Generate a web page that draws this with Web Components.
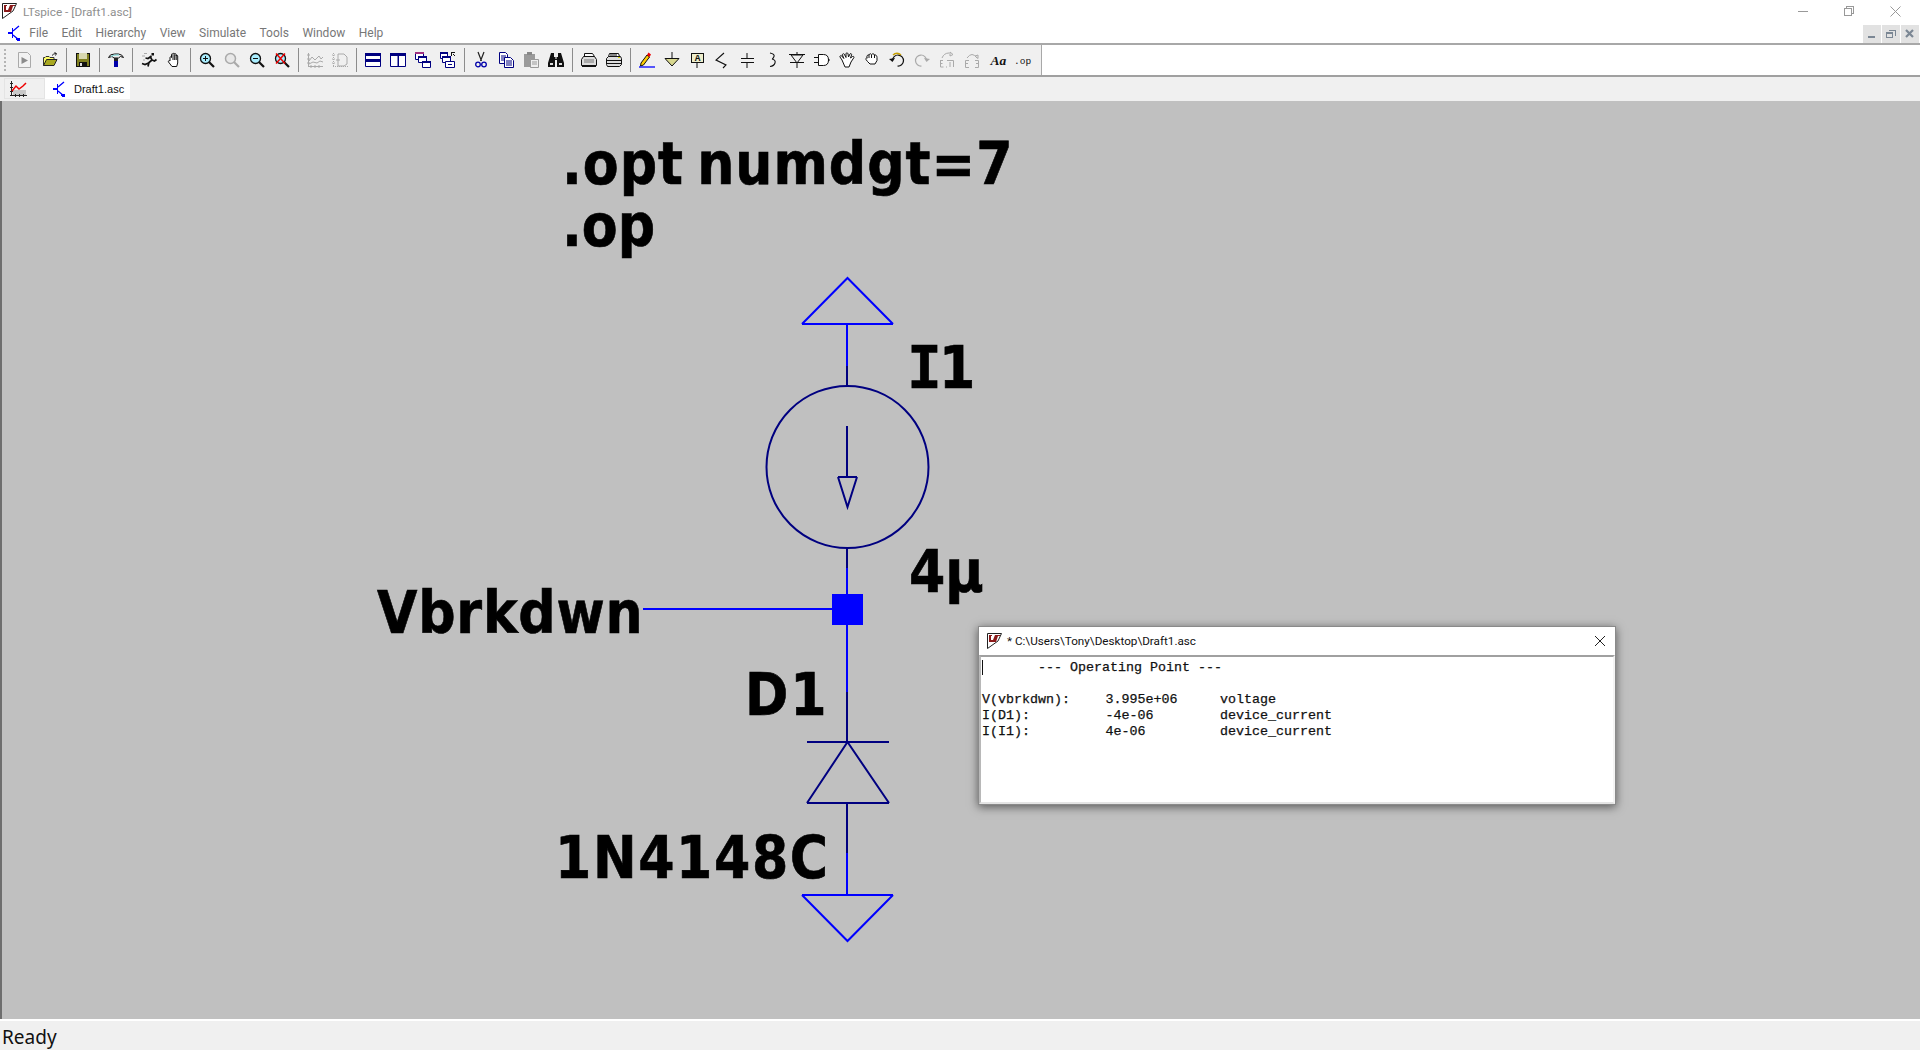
<!DOCTYPE html>
<html>
<head>
<meta charset="utf-8">
<title>LTspice</title>
<style>
html, body { margin: 0; padding: 0; height: 100%; overflow: hidden; background: #f0f0f0; }
</style>
</head>
<body>
<lt-app>
    <lt-titlebar slot="title">LTspice - [Draft1.asc]</lt-titlebar>
    <lt-menubar slot="menu">
        <lt-menu>File</lt-menu><lt-menu>Edit</lt-menu><lt-menu>Hierarchy</lt-menu><lt-menu>View</lt-menu>
        <lt-menu>Simulate</lt-menu><lt-menu>Tools</lt-menu><lt-menu>Window</lt-menu><lt-menu>Help</lt-menu>
    </lt-menubar>
    <lt-toolbar slot="tools"></lt-toolbar>
    <lt-tabs slot="tabs">Draft1.asc</lt-tabs>
    <lt-schematic slot="canvas">
        <lt-label x="562" base="184" spacing="1">.opt numdgt=7</lt-label>
        <lt-label x="562" base="246">.op</lt-label>
        <lt-label x="907" base="388"><span style="font-family:'DejaVu Sans Mono',monospace;letter-spacing:-3px">I</span>1</lt-label>
        <lt-label x="909" base="592">4µ</lt-label>
        <lt-label x="377" base="633" spacing="0.8">Vbrkdwn</lt-label>
        <lt-label x="745" base="715" spacing="2">D1</lt-label>
        <lt-label x="555" base="878" spacing="1.6">1N4148C</lt-label>
        <lt-log-window>
            <lt-log-row first="--- Operating Point ---" head></lt-log-row>
            <lt-log-row></lt-log-row>
            <lt-log-row first="V(vbrkdwn):" second="3.995e+06" third="voltage"></lt-log-row>
            <lt-log-row first="I(D1):" second="-4e-06" third="device_current"></lt-log-row>
            <lt-log-row first="I(I1):" second="4e-06" third="device_current"></lt-log-row>
        </lt-log-window>
    </lt-schematic>
    <lt-status slot="status">Ready</lt-status>
</lt-app>

<script>
// small shared drawings
const LT_LOGO = `<svg width="16" height="18" viewBox="0 0 16 18"><path d="M1.5 1.5h14L12 9 1.5 16.5z" fill="#fff" stroke="#222"/><path d="M3 3h3v1H5v4h2l2-5h5v1h-2l-2 6H3z" fill="#8b1a1a"/></svg>`;
const TRANSISTOR = `<svg width="14" height="16" viewBox="0 0 14 16" shape-rendering="crispEdges"><path d="M0 8h4M4.5 3v10" stroke="#00f" stroke-width="1.5" fill="none"/><path d="M5 6l6-5M5 10l6 5" stroke="#00f" stroke-width="1.3" fill="none" shape-rendering="auto"/><path d="M8 13h4v3H9z" fill="#00f"/></svg>`;

// toolbar icons, all on a 16x16 grid
const ICONS = {
    new: `<path d="M1.500 .5h9l3 3v12h-12z" fill="#f2f2f2" stroke="#aaa"/><path d="M4.500 5l6.500 3.500L4.500 12z" fill="#8c8c8c"/>`,
    open: `<path d="M1.500 13.500v-8h1.500l1-1h3l1 1h4v2" fill="#ff6" stroke="#333" /><path d="M1.500 13.500l3-6h10.500l-3 6z" fill="#a8a820" stroke="#222"/><path d="M10 3.500q1.500-2 4-2M12.500 .5l2 1-1 2" fill="none" stroke="#222"/>`,
    save: `<path d="M1 1h14v14H1z" fill="#111"/><path d="M2 2h12v12H2z" fill="#808020"/><path d="M4 1h8v6H4z" fill="#d8d8b0"/><path d="M4 10h8v5H4z" fill="#111"/><path d="M5 11h2v3H5z" fill="#ddd"/>`,
    hammer: `<path d="M.5 5.500q1-3.500 6-3.500h4q4 .5 5 3.500l-3-1-2 1.500H6L4 4.500z" fill="#eee" stroke="#111"/><path d="M3 4.500q2-1.500 5-1.500h3" fill="none" stroke="#7dd"/><path d="M6 6h4v3H6z" fill="#222"/><path d="M6 9h4v6H6z" fill="#00a"/>`,
    run: `<path d="M10.500 1h2.500v2.500h-2.500z" fill="#111"/><path d="M10.500 4L7 6.500 4.500 6M9.500 5l1.500 3-3 2.500-1 4M11 8l2.500 1 2-1.500M7.500 11L4 12.500 1 11.500" fill="none" stroke="#111" stroke-width="1.700"/><path d="M3 1.500h3M1 4h3M2 8h2" stroke="#aaa" fill="none"/>`,
    hand: `<path d="M4 9V5.500c0-1 1.500-1 1.500 0V2.500c0-1 1.500-1 1.500 0V2c0-1 1.700-1 1.700 0v.5c0-1 1.500-1 1.500 0V4c0-1 1.500-1 1.500 0v7l-1 3.500H6L2.500 10c-.6-1 .6-2 1.500-1z" fill="#fff" stroke="#111"/><path d="M7 3v5M8.700 3v5M10.200 3v5" stroke="#111" fill="none"/>`,
    zoomin: `<circle cx="6.500" cy="6.500" r="5" fill="#aef" stroke="#111" stroke-width="1.300"/><path d="M4 6.500h5M6.500 4v5" stroke="#111"/><path d="M10 10l5 5" stroke="#111" stroke-width="2.200"/>`,
    zoomgray: `<circle cx="6.500" cy="6.500" r="5" fill="#e8e8e8" stroke="#aaa" stroke-width="1.500"/><path d="M10 10l5 5" stroke="#aaa" stroke-width="2.200"/>`,
    zoomout: `<circle cx="6.500" cy="6.500" r="5" fill="#aef" stroke="#111" stroke-width="1.300"/><path d="M4 6.500h5" stroke="#111"/><path d="M10 10l5 5" stroke="#111" stroke-width="2.200"/>`,
    zoomcancel: `<circle cx="6.500" cy="6.500" r="5" fill="#aef" stroke="#111" stroke-width="1.300"/><path d="M10 10l5 5" stroke="#111" stroke-width="2.200"/><path d="M2 1.500l9 10M11 1.500l-9 10" stroke="#e00" stroke-width="1.500"/>`,
    plot: `<path d="M1.500 1v14M0 3h3M0 7h3M0 11h3M1 14.500h15M4 13v3M8 13v3M12 13v3" stroke="#aaa" fill="none"/><path d="M2 9l3-4 3 3 4-4 2 3 2-2M2 12l4-2 4 1 3-2 3 1" stroke="#aaa" fill="none"/>`,
    plotzoom: `<path d="M1.500 1v14M0 3h3M0 7h3M0 11h3M1 14.500h15" stroke="#aaa" fill="none" stroke-dasharray="1 1"/><path d="M6 2h6l3 3v7l-3 2H6z M4 8h4" stroke="#aaa" fill="none"/>`,
    tileh: `<path d="M.5 1.500h15v13H.5z" fill="#fff" stroke="#000080"/><path d="M0 1h16v3H0zM0 7h16v3H0z" fill="#000080"/>`,
    tilev: `<path d="M.5 1.500h15v13H.5zM8 2v13" fill="#fff" stroke="#000080"/><path d="M0 1h16v3H0z" fill="#000080"/><path d="M8 1h1v14H8z" fill="#000080"/>`,
    cascade: `<path d="M.5 .5h8v7h-8z" fill="#fff" stroke="#000080"/><path d="M0 0h9v2H0z" fill="#a03080"/><path d="M3.500 4.500h8v6h-8z" fill="#fff" stroke="#000080"/><path d="M3 4h9v2H3z" fill="#000080"/><path d="M7.500 9.500h8v6h-8z" fill="#fff" stroke="#000080"/><path d="M7 9h9v2H7z" fill="#000080"/>`,
    arrange: `<path d="M.5 .5h7v6h-7z" fill="#fff" stroke="#000080"/><path d="M0 0h8v2H0z" fill="#000080"/><path d="M2.500 4.500h8v6h-8z" fill="#fff" stroke="#000080"/><path d="M2 4h9v2H2z" fill="#000080"/><path d="M5.500 9.500h9v6h-9z" fill="#fff" stroke="#000080"/><path d="M8 12h4v1H8z" fill="#000080"/><path d="M11 0h4v1h-3v3h-1zM13 2h1v1h1v1h-1v-1h-1z" fill="#111"/>`,
    cut: `<path d="M5 0l3.500 9M11 0L7.500 9" stroke="#222" fill="none" stroke-width="1.200"/><circle cx="5" cy="12.500" r="2.300" fill="none" stroke="#00a" stroke-width="1.300"/><circle cx="11" cy="12.500" r="2.300" fill="none" stroke="#00a" stroke-width="1.300"/>`,
    copy: `<path d="M1.500 .5h6l2 2v9h-8z" fill="#fff" stroke="#000080"/><path d="M3 4h5M3 6h5M3 8h5" stroke="#000080"/><path d="M6.500 5.500h6l3 3v7h-9z" fill="#fff" stroke="#000080"/><path d="M8 9h6M8 11h6M8 13h6" stroke="#000080"/>`,
    paste: `<path d="M1 2h11v13H1z" fill="#9a9a9a"/><path d="M4 0h5v3H4z" fill="#888"/><path d="M7.500 7.500h8v8h-8z" fill="#eee" stroke="#999"/><path d="M9 10h5M9 12h5" stroke="#999"/>`,
    find: `<path d="M3 1h3v4h4V1h3l3 10v4H9V8H7v7H0v-4z" fill="#111"/><path d="M2 11h3v2H2zM11 11h3v2h-3z" fill="#ddd"/><path d="M7 5h2v2H7z" fill="#888"/>`,
    preview: `<path d="M3.500 1.500h8l2 3v3h-10z" fill="#fff" stroke="#111"/><path d="M.5 7.500l2-3h11l2 3v6h-15z" fill="#ddd" stroke="#111"/><path d="M3 7h10v4H3z" fill="#aaa"/><path d="M1 13h14v2H1z" fill="#111"/>`,
    print: `<path d="M3.500 1.500h9l1 3h-11z" fill="#fff" stroke="#111"/><path d="M4 3h7" stroke="#111"/><path d="M.5 6.500l2-2h12l1 2v6l-2 2h-12l-1-2z" fill="#ddd" stroke="#111"/><path d="M1 8h14v1H1zM1 11h14v1H1z" fill="#111"/><path d="M12 5h2v1h-2z" fill="#dd0"/>`,
    pencil: `<path d="M2 11l6-8 2.500 2-6 8-3 1z" fill="#fc0" stroke="#111"/><path d="M8 3l1.500-2.500 2.500 2L10.500 5z" fill="#e00"/><path d="M0 15h16" stroke="#00f" stroke-width="1.300"/>`,
    ground: `<path d="M8 0v6" stroke="#111"/><path d="M1 6.500h14L8 14z" fill="#d8d890" stroke="#111"/><path d="M1 6h14v1H1z" fill="#111"/>`,
    label: `<path d="M8 11v5" stroke="#111"/><path d="M2 1h13v10H2z" fill="#111"/><path d="M3 2h11v8H3z" fill="#eec"/><text x="8.500" y="9.300" font-family="Liberation Mono, monospace" font-size="9.500" font-weight="bold" text-anchor="middle" fill="#111">A</text>`,
    res: `<path d="M10 1L2 8l10 5-3 3" fill="none" stroke="#111" stroke-width="1.100"/>`,
    cap: `<path d="M8 1v5M2 6.500h13M2 10.500h13M8 11v5" fill="none" stroke="#111"/>`,
    ind: `<path d="M6 1q5 1 4 3.500T8 7q4 1 3 4t-5 3.500" fill="none" stroke="#111" stroke-width="1.100"/>`,
    diode: `<path d="M0 2.500h16M2 3h12L8 11zM8 0v3M1 10.500h14M8 11v5" fill="none" stroke="#111"/>`,
    comp: `<path d="M0 5.500h4M0 10.500h4M4.500 2.500h5q5 0 5 5.500t-5 5.500h-5zM14 8h2" fill="#fff" stroke="#111"/>`,
    hopen: `<path d="M3 8L1 5c-.5-1 1-2 1.800-1l2 2.500L3.500 3c-.5-1 1.200-1.800 1.800-.8L7 5.500V1.800c0-1.300 1.800-1.300 2 0L9.500 5 11 2c.5-1 2-.3 1.600.8L11.500 6l2-1.500c1-.6 2 .5 1.200 1.400L12 10l-2 5H6z" fill="#fff" stroke="#111"/>`,
    hclosed: `<path d="M3 5.500C2.500 3.500 4 2.500 5 3c.5-1.500 2-1.500 2.500-.5 1-1 2.500-1 3 .5 1-.5 2.500.5 2.500 2.500v3l-2 3.500H6L3.500 9.500 2 7.500c-.5-1 .5-2 1.500-1.500zM7.500 3v3M10.500 3v3M5 3v3" fill="#fff" stroke="#111"/>`,
    undo: `<path d="M3.500 8.500A5.500 5.500 0 1 1 8.500 14" fill="none" stroke="#111" stroke-width="1.200"/><path d="M4 3a5.500 5.500 0 0 1 8 0" fill="none" stroke="#c8a000" stroke-width="1.300"/><path d="M0 7l3.500 3L6 6z" fill="#111"/>`,
    redo: `<path d="M12.500 8.500A5.500 5.500 0 1 0 7.500 14" fill="none" stroke="#aaa" stroke-width="1.200"/><path d="M16 7l-3.500 3L10 6z" fill="#aaa"/>`,
    rot: `<path d="M1 8.500h3M1.500 8v7h3M1 11.500h2.500M8 8.500h6.500V15M11 10v5M7 15h1" fill="none" stroke="#aaa"/><path d="M3 6Q5 1 10 1M11 0l3 2.500L11 4z" fill="none" stroke="#aaa"/>`,
    mirror: `<path d="M5 8.500H1.500v7H5M1 11.500h3M11 8.500h3.500v7H11M12 11.500h2.500" fill="none" stroke="#aaa"/><path d="M3 6Q8 -1 13 6M11 4l3 2.500V3z" fill="none" stroke="#aaa"/>`,
    aa: `<text x="1.500" y="13" font-family="Liberation Serif, serif" font-size="13.500" font-weight="bold" font-style="italic" fill="#111">Aa</text>`,
    dotop: `<text x="0" y="12" font-family="Liberation Mono, monospace" font-size="9.500" fill="#111">.op</text>`
};

// toolbar layout, "|" is a separator
const TOOLBAR_ITEMS = ["new", "open", "|", "save", "|", "hammer", "|", "run", "hand", "|",
    "zoomin", "zoomgray", "zoomout", "zoomcancel", "|", "plot", "plotzoom", "|",
    "tileh", "tilev", "cascade", "arrange", "|", "cut", "copy", "paste", "find", "|", "preview", "print", "|",
    "pencil", "ground", "label", "res", "cap", "ind", "diode", "comp", "hopen", "hclosed",
    "undo", "redo", "rot", "mirror", "aa", "dotop"];

class LtApp extends HTMLElement {
    constructor() {
        super();
        this.attachShadow({ mode: "open" }).innerHTML = `
        <style>
            :host { display: flex; flex-direction: column; width: 1920px; height: 1050px; }
            .grow { flex: 1; display: flex; min-height: 0; }
        </style>
        <slot name="title"></slot>
        <slot name="menu"></slot>
        <slot name="tools"></slot>
        <slot name="tabs"></slot>
        <div class="grow"><slot name="canvas"></slot></div>
        <slot name="status"></slot>`;
    }
}

class LtTitlebar extends HTMLElement {
    constructor() {
        super();
        this.attachShadow({ mode: "open" }).innerHTML = `
        <style>
            :host { display: flex; align-items: center; height: 22px; background: #fff; color: #8f8f8f;
                font: 11.800px Roboto, sans-serif; }
            .logo { margin: 0 6px 0 1px; height: 18px; }
            .text { flex: 1; padding-top: 2px; }
            .caps { display: flex; height: 21px; margin-right: 2px; }
            .caps span { width: 46px; display: flex; align-items: center; justify-content: center; }
        </style>
        <div class="logo">${LT_LOGO}</div>
        <div class="text"><slot></slot></div>
        <div class="caps">
            <span><svg width="10" height="10" shape-rendering="crispEdges"><path d="M0 5h10" stroke="#999"/></svg></span>
            <span><svg width="10" height="10" shape-rendering="crispEdges"><path d="M.5 2.500h7v7h-7zM2.500 2V.5h7v7H8" fill="none" stroke="#999"/></svg></span>
            <span><svg width="11" height="11"><path d="M.5 .5l10 10M10.500 .5l-10 10" fill="none" stroke="#999"/></svg></span>
        </div>`;
    }
}

class LtMenubar extends HTMLElement {
    constructor() {
        super();
        this.attachShadow({ mode: "open" }).innerHTML = `
        <style>
            :host { display: flex; align-items: center; height: 21px; background: #fff; }
            .icon { margin: 0 .5px 0 8px; height: 16px; }
            .items { flex: 1; display: flex; }
            .mdi { display: flex; gap: 1px; margin-right: 1px; height: 18px; margin-top: 2px; }
            .mdi span { width: 18px; background: #e2e2e2; display: flex; align-items: center; justify-content: center; }
        </style>
        <div class="icon">${TRANSISTOR}</div>
        <div class="items"><slot></slot></div>
        <div class="mdi">
            <span><svg width="10" height="10" shape-rendering="crispEdges"><path d="M1 7h7v2H1z" fill="#7b8794"/></svg></span>
            <span><svg width="10" height="10" shape-rendering="crispEdges"><path d="M.5 3.500h6v5h-6zM3 1.500h6v5" fill="none" stroke="#7b8794"/><path d="M0 3h7v2H0z" fill="#7b8794"/></svg></span>
            <span><svg width="10" height="10"><path d="M1 1l7 7M8 1L1 8" stroke="#7b8794" stroke-width="2.200"/></svg></span>
        </div>`;
    }
}

class LtMenu extends HTMLElement {
    constructor() {
        super();
        this.attachShadow({ mode: "open" }).innerHTML = `
        <style>
            :host { display: block; padding: 0 6.750px; color: #777; font: 12px Roboto, sans-serif; }
        </style>
        <slot></slot>`;
    }
}

class LtTool extends HTMLElement {
    constructor() {
        super();
        const name = this.getAttribute("icon");
        this.attachShadow({ mode: "open" }).innerHTML = `
        <style>
            :host { display: flex; align-items: center; justify-content: center; width: 25px; height: 100%; }
            svg { display: block; overflow: visible; }
        </style>
        <svg width="16" height="16" viewBox="0 0 16 16">${ICONS[name]}</svg>`;
    }
}

class LtToolbar extends HTMLElement {
    constructor() {
        super();
        this.attachShadow({ mode: "open" }).innerHTML = `
        <style>
            :host { display: flex; height: 34px; background: #fff; box-sizing: border-box;
                border-top: 2px solid #a8a8a8; border-bottom: 2px solid #a0a0a0; }
            .band { display: flex; align-items: stretch; padding: 0 6.5px 0 12.5px; background: #f0f0f0;
                border-right: 1px solid #a8a8a8; position: relative; }
            .grip { position: absolute; left: 4px; top: 4px; bottom: 4px; width: 2px;
                background: repeating-linear-gradient(#b4b4b4 0 2px, transparent 2px 4px); }
            .sep { width: 8px; display: flex; justify-content: center; padding: 3px 0; box-sizing: border-box; }
            .sep i { width: 1px; background: #8c8c8c; }
        </style>
        <div class="band">
            <div class="grip"></div>
            ${TOOLBAR_ITEMS.map((item) => item === "|" ? `<div class="sep"><i></i></div>` : `<lt-tool icon="${item}"></lt-tool>`).join("")}
        </div>`;
    }
}

class LtTabs extends HTMLElement {
    constructor() {
        super();
        this.attachShadow({ mode: "open" }).innerHTML = `
        <style>
            :host { display: flex; height: 24px; background: #f0f0f0; box-sizing: border-box;
                padding: 1px 0 2px 4px; font: 11px "Liberation Sans", sans-serif; color: #111; }
            .graph { width: 41px; box-sizing: border-box; border: 1px solid #e4e4e4; padding-left: 5px; display: flex; align-items: center; }
            .tab { width: 85px; background: #fff; display: flex; align-items: center; gap: 7px; padding-left: 8px; box-sizing: border-box; }
        </style>
        <div class="graph">
            <svg width="17" height="16" viewBox="0 0 17 16" shape-rendering="crispEdges">
                <path d="M3 9h13v5H3z" fill="#c8c8c8"/>
                <path d="M1.500 0v15M0 2h3M0 6h3M0 10h3M0 14.500h17M5 13v3M9 13v3M13 13v3" stroke="#222" fill="none"/>
                <path d="M2 10l4-5 3 3 4-3 3-3" stroke="#e00" stroke-width="1.500" fill="none" shape-rendering="auto"/>
            </svg>
        </div>
        <div class="tab">${TRANSISTOR}<span><slot></slot></span></div>`;
    }
}

class LtSchematic extends HTMLElement {
    constructor() {
        super();
        // viewBox uses page coordinates, the canvas starts at y=101
        this.attachShadow({ mode: "open" }).innerHTML = `
        <style>
            :host { display: block; position: relative; flex: 1; background: #c0c0c0; border-left: 2px solid #6e6e6e; overflow: hidden; }
            svg { position: absolute; left: -2px; top: 0; }
            .wire { stroke: #0000ff; stroke-width: 2; fill: none; }
            .sym { stroke: #000080; stroke-width: 2; fill: none; }
        </style>
        <svg width="1920" height="919" viewBox="0 101 1920 919">
            <g shape-rendering="crispEdges">
                <path class="wire" d="M847 324V366M847 568V594M847 625V692M847 853V895M643 609H832M802 324H893M802 895H893"/>
                <path class="sym" d="M847 366V386M847 548V568M847 692V742M847 803V853M847 426V477M838 477H857M807 742H889M807 803H889"/>
                <rect x="832" y="594" width="31" height="31" fill="#0000ff"/>
            </g>
            <path class="wire" d="M802 324L847.500 278L893 324M802 895L847.500 941L893 895"/>
            <circle class="sym" cx="847.500" cy="467" r="81"/>
            <path class="sym" d="M838 477L847.500 507L857 477M807 803L847.500 742L889 803"/>
        </svg>
        <slot></slot>`;
    }
}

class LtLabel extends HTMLElement {
    constructor() {
        super();
        this.attachShadow({ mode: "open" }).innerHTML = `
        <style>
            :host { position: absolute; white-space: nowrap; color: #000; word-spacing: -6px;
                font: bold 58px/1 "DejaVu Sans", sans-serif; font-stretch: condensed; -webkit-text-stroke: .6px #000; }
        </style>
        <slot></slot>`;
    }
    connectedCallback() {
        // x and base are page coordinates of the text start and its baseline
        const baselineInBox = 58 * 0.846;
        this.style.left = (Number(this.getAttribute("x")) - 2) + "px";
        this.style.top = (Number(this.getAttribute("base")) - 101 - baselineInBox) + "px";
        this.style.letterSpacing = (this.getAttribute("spacing") || 0) + "px";
    }
}

class LtLogWindow extends HTMLElement {
    constructor() {
        super();
        this.attachShadow({ mode: "open" }).innerHTML = `
        <style>
            :host { position: absolute; left: 976px; top: 525px; width: 638px; height: 179px; box-sizing: border-box;
                display: flex; flex-direction: column; background: #fff; border: 1px solid #8a8a8a;
                box-shadow: 0 2px 9px rgba(0,0,0,.55); }
            .head { height: 28px; display: flex; align-items: center; font: 11.700px Roboto, sans-serif; color: #111; }
            .head svg { margin: 0 5px 0 7px; }
            .head span { flex: 1; }
            .head .x { margin-right: 9px; }
            .body { flex: 1; border: 2px solid; border-color: #a0a0a0 #f4f4f4 #e4e4e4 #b8b8b8; padding: 3px 0 0 1px; position: relative; }
            .caret { position: absolute; left: 1px; top: 3px; width: 1px; height: 15px; background: #111; }
        </style>
        <div class="head">
            ${LT_LOGO}
            <span>* C:\\Users\\Tony\\Desktop\\Draft1.asc</span>
            <svg class="x" width="12" height="12"><path d="M1 1l10 10M11 1L1 11" stroke="#222" fill="none"/></svg>
        </div>
        <div class="body"><div class="caret"></div><slot></slot></div>`;
    }
}

class LtLogRow extends HTMLElement {
    constructor() {
        super();
        const first = this.getAttribute("first") || "";
        const second = this.getAttribute("second") || "";
        const third = this.getAttribute("third") || "";
        const head = this.hasAttribute("head");
        this.attachShadow({ mode: "open" }).innerHTML = `
        <style>
            :host { display: grid; grid-template-columns: 123.500px 114.500px 1fr; height: 16px; white-space: pre;
                color: #111; font: 13.330px/16px "Liberation Mono", monospace; -webkit-text-stroke: .25px #111; }
            .wide { grid-column: 1 / 4; padding-left: 56px; }
        </style>
        ${head ? `<span class="wide">${first}</span>` : `<span>${first}</span><span>${second}</span><span>${third}</span>`}`;
    }
}

class LtStatus extends HTMLElement {
    constructor() {
        super();
        this.attachShadow({ mode: "open" }).innerHTML = `
        <style>
            :host { display: flex; align-items: center; height: 31px; box-sizing: border-box; background: #f0f0f0;
                border-top: 2px solid #fff; padding: 2px 0 0 2px; color: #111; font: 19px "Noto Sans", sans-serif; }
        </style>
        <slot></slot>`;
    }
}

customElements.define("lt-tool", LtTool);
customElements.define("lt-app", LtApp);
customElements.define("lt-titlebar", LtTitlebar);
customElements.define("lt-menubar", LtMenubar);
customElements.define("lt-menu", LtMenu);
customElements.define("lt-toolbar", LtToolbar);
customElements.define("lt-tabs", LtTabs);
customElements.define("lt-schematic", LtSchematic);
customElements.define("lt-label", LtLabel);
customElements.define("lt-log-window", LtLogWindow);
customElements.define("lt-log-row", LtLogRow);
customElements.define("lt-status", LtStatus);
</script>
</body>
</html>
